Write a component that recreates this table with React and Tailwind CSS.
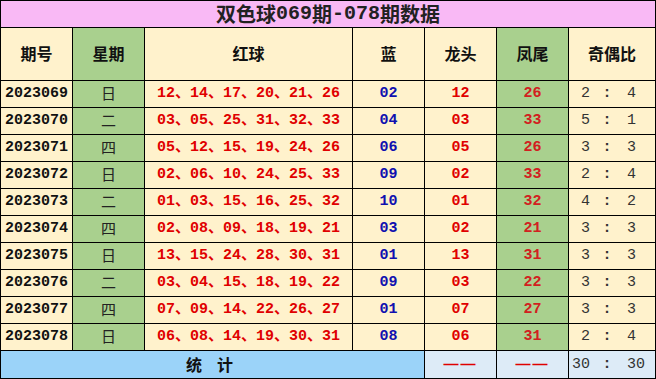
import React from 'react';

const rows = [
  ['2023069', '日', '12、14、17、20、21、26', '02', '12', '26', '2', '4'],
  ['2023070', '二', '03、05、25、31、32、33', '04', '03', '33', '5', '1'],
  ['2023071', '四', '05、12、15、19、24、26', '06', '05', '26', '3', '3'],
  ['2023072', '日', '02、06、10、24、25、33', '09', '02', '33', '2', '4'],
  ['2023073', '二', '01、03、15、16、25、32', '10', '01', '32', '4', '2'],
  ['2023074', '四', '02、08、09、18、19、21', '03', '02', '21', '3', '3'],
  ['2023075', '日', '13、15、24、28、30、31', '01', '13', '31', '3', '3'],
  ['2023076', '二', '03、04、15、18、19、22', '09', '03', '22', '3', '3'],
  ['2023077', '四', '07、09、14、22、26、27', '01', '07', '27', '3', '3'],
  ['2023078', '日', '06、08、14、19、30、31', '08', '06', '31', '2', '4'],
];

const cjk = "font-['Noto_Sans_CJK_SC',sans-serif]";
const mono = "font-['Liberation_Mono','Noto_Sans_CJK_SC',monospace]";
const cell = 'flex items-center justify-center bg-[#fff2cc] leading-[20px]';
const green = 'flex items-center justify-center bg-[#a9d08e] leading-[20px]';

function Ratio({ a, b, bg }) {
  return (
    <div className={`flex items-center ${bg} pl-[3px] text-[15px] leading-[20px] text-[#333] ${mono}`}>
      <span className="w-[18px] text-right">{a}</span>
      <span className="w-[34px] text-center font-bold">:</span>
      <span className="pl-[3px]">{b}</span>
    </div>
  );
}

export default function App() {
  return (
    <div className="w-[656px] h-[379px] bg-white">
      <div className="grid grid-cols-[71px_71px_207px_71px_71px_71px_86px] grid-rows-[26px_52px_repeat(10,26px)_27px] gap-px bg-black p-px w-[656px]">
        <div className={`col-span-7 flex items-center justify-center bg-[#f9b9f5] text-[20px] leading-[20px] font-bold text-[#222] ${cjk}`}>
          <span className="leading-none">双色球</span>
          <span className={`leading-none ${mono}`}>069</span>
          <span className="leading-none">期</span>
          <span className={`leading-none ${mono}`}>-078</span>
          <span className="leading-none">期数据</span>
        </div>

        {['期号', '星期', '红球', '蓝', '龙头', '凤尾', '奇偶比'].map((h, i) => (
          <div key={h} className={`${i === 1 || i === 5 ? green : cell} pb-[2px] text-[16px] font-bold text-[#111] ${cjk}`}>
            {h}
          </div>
        ))}

        {rows.map((r) => (
          <React.Fragment key={r[0]}>
            <div className={`${cell} text-[15px] font-bold text-[#111] ${mono}`}>{r[0]}</div>
            <div className={`${green} pb-[3px] text-[15px] text-[#222] ${cjk}`}>{r[1]}</div>
            <div className={`${cell} text-[15px] font-bold text-[#e00000] ${mono}`}>{r[2]}</div>
            <div className={`${cell} text-[15px] font-bold text-[#1010b0] ${mono}`}>{r[3]}</div>
            <div className={`${cell} text-[15px] font-bold text-[#e00000] ${mono}`}>{r[4]}</div>
            <div className={`${green} text-[15px] font-bold text-[#d22020] ${mono}`}>{r[5]}</div>
            <Ratio a={r[6]} b={r[7]} bg="bg-[#fff2cc]" />
          </React.Fragment>
        ))}

        <div className={`col-span-4 flex items-center justify-center gap-[15px] bg-[#9bd3f9] pr-[6px] pb-[2px] text-[16px] leading-[20px] font-bold text-[#111] ${cjk}`}>
          <span>统</span>
          <span>计</span>
        </div>
        <div className="flex items-center justify-center bg-[#ddebf7] pb-[2px] font-['Liberation_Sans',sans-serif] text-[15px] leading-[20px] font-bold tracking-[2px] text-[#e00000]">——</div>
        <div className="flex items-center justify-center bg-[#ddebf7] pb-[2px] font-['Liberation_Sans',sans-serif] text-[15px] leading-[20px] font-bold tracking-[2px] text-[#e00000]">——</div>
        <Ratio a="30" b="30" bg="bg-[#ddebf7]" />
      </div>
    </div>
  );
}
